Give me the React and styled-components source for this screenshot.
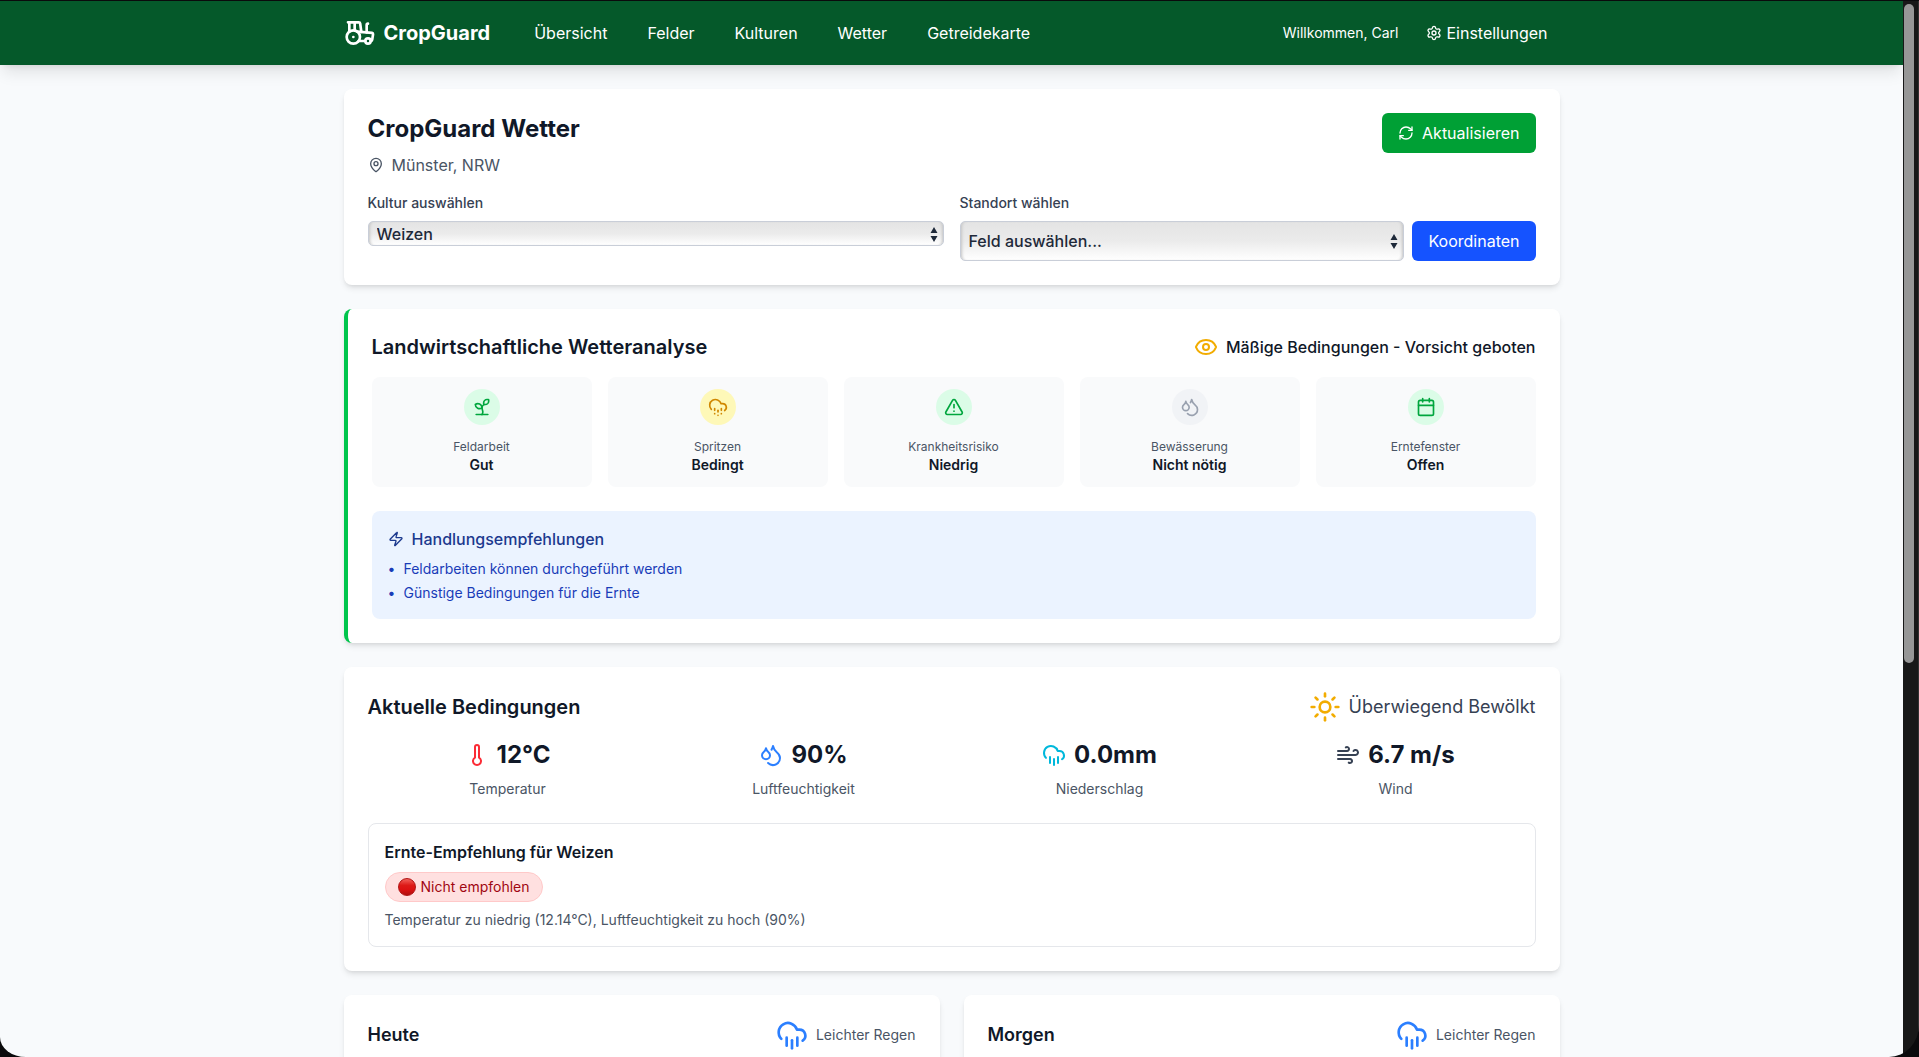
import React from "react";
import styled, { createGlobalStyle } from "styled-components";
import {
  Tractor, Settings, MapPin, RefreshCw, Eye, Sprout, CloudHail, TriangleAlert, Droplets,
  Calendar, Zap, Sun, Thermometer, CloudRain, Wind,
} from "lucide-react";

const GlobalStyle = createGlobalStyle`
  *, *::before, *::after { box-sizing: border-box; }
  body {
    margin: 0;
    background: #0a0a0c;
    color: #101828;
    font: 400 16px/24px Inter, "Liberation Sans", sans-serif;
  }
  h1, h2, h3, p, ul { margin: 0; padding: 0; }
  svg { display: block; flex: none; }
`;

const Frame = styled.div`
  height: 100vh;
  padding-top: 1px;
  background: #0a0a0c;
`;

const WindowShell = styled.div`
  display: flex;
  height: 100%;
  overflow: hidden;
  border-radius: 0 0 30px 26px / 0 0 32px 20px;
  background: #181818;
`;

const Page = styled.div`
  flex: 1;
  min-width: 0;
  overflow: hidden;
  background: #f8fafc;
`;

const ScrollTrack = styled.div`
  flex: none;
  width: 16px;
  padding: 3px 4px 0 1px;
  border-right: 1px solid #333;
`;

const ScrollThumb = styled.div`
  height: 62.6%;
  border-radius: 6px;
  background: #979797;
`;

const Header = styled.header`
  position: relative;
  background: #05592a;
  color: #fff;
  box-shadow: 0 10px 15px -3px rgba(0, 0, 0, 0.1), 0 4px 6px -4px rgba(0, 0, 0, 0.1);
`;

const HeaderInner = styled.div`
  display: flex;
  align-items: center;
  justify-content: space-between;
  max-width: 1280px;
  height: 64px;
  margin: 0 auto;
  padding: 0 32px;
`;

const HeaderGroup = styled.div`
  display: flex;
  align-items: center;
  gap: ${(p) => p.$gap}px;
`;

const Brand = styled.a`
  display: flex;
  align-items: center;
  gap: 8px;
  color: inherit;
  font-size: 20px;
  line-height: 28px;
  font-weight: 700;
  text-decoration: none;
`;

const Nav = styled.nav`
  display: flex;
  gap: 16px;
`;

const NavLink = styled.a`
  display: flex;
  align-items: center;
  gap: 4px;
  padding: 8px 12px;
  color: inherit;
  text-decoration: none;
`;

const Welcome = styled.span`
  font-size: 14px;
  line-height: 20px;
`;

const Main = styled.main`
  display: flex;
  flex-direction: column;
  gap: 24px;
  max-width: 1280px;
  margin: 0 auto;
  padding: 24px 32px;
`;

const Card = styled.section`
  padding: 24px;
  border-radius: 8px;
  border-left: ${(p) => (p.$accent ? `4px solid ${p.$accent}` : "none")};
  background: #fff;
  box-shadow: 0 4px 6px -1px rgba(0, 0, 0, 0.1), 0 2px 4px -2px rgba(0, 0, 0, 0.1);
`;

const CardHead = styled.div`
  display: flex;
  align-items: ${(p) => p.$align || "center"};
  justify-content: space-between;
  margin-bottom: 16px;
`;

const PageTitle = styled.h1`
  font-size: 24px;
  line-height: 32px;
  font-weight: 700;
`;

const Location = styled.p`
  display: flex;
  align-items: center;
  gap: 8px;
  margin-top: 8px;
  color: #4a5565;
`;

const Button = styled.button`
  display: flex;
  align-items: center;
  gap: 8px;
  padding: 8px 16px;
  border: 0;
  border-radius: 6px;
  background: ${(p) => p.$color};
  color: #fff;
  font: inherit;
`;

const FormGrid = styled.div`
  display: grid;
  grid-template-columns: 1fr 1fr;
  gap: 16px;
`;

const Label = styled.label`
  display: block;
  margin-bottom: 8px;
  color: #364153;
  font-size: 14px;
  line-height: 20px;
  font-weight: 500;
`;

const FieldRow = styled.div`
  display: flex;
  gap: 8px;
`;

const SelectBox = styled.div`
  position: relative;
  flex: 1;
  display: flex;
  height: ${(p) => p.$height}px;
`;

const Select = styled.select`
  appearance: none;
  width: 100%;
  padding: 0 24px 0 8px;
  border: 1px solid #c9ced8;
  border-radius: 5px;
  background: linear-gradient(#e4e4e4, #ebebeb 50%, #ffffff);
  box-shadow: inset 3px 0 3px -2px #c4c4c4, inset -3px 0 3px -2px #c4c4c4;
  color: #1e2939;
  font: inherit;
  font-weight: 500;
`;

const SelectArrows = styled.svg`
  position: absolute;
  top: 50%;
  right: 6px;
  margin-top: -7px;
  fill: #1e2939;
  pointer-events: none;
`;

const Heading = styled.h2`
  font-size: ${(p) => (p.$small ? 18 : 20)}px;
  line-height: 28px;
  font-weight: 600;
`;

const Status = styled.div`
  display: flex;
  align-items: center;
  gap: 8px;
  color: ${(p) => p.$color || "#101828"};
  font-size: ${(p) => p.$size || 16}px;
  line-height: ${(p) => (p.$size === 18 ? 28 : 24)}px;
  font-weight: ${(p) => p.$weight || 400};
`;

const Tiles = styled.div`
  display: grid;
  grid-template-columns: repeat(5, 1fr);
  gap: 16px;
`;

const Tile = styled.div`
  display: flex;
  flex-direction: column;
  align-items: center;
  padding: 12px;
  border-radius: 8px;
  background: #f9fafb;
`;

const TileIcon = styled.div`
  margin-bottom: 14px;
  padding: 8px;
  border-radius: 50%;
  background: ${(p) => p.$bg};
  color: ${(p) => p.$fg};
`;

const TileLabel = styled.p`
  color: #4a5565;
  font-size: 12px;
  line-height: 16px;
`;

const TileValue = styled.p`
  font-size: 14px;
  line-height: 20px;
  font-weight: 600;
`;

const Advice = styled.div`
  margin-top: 24px;
  padding: 16px;
  border-radius: 8px;
  background: #ebf3ff;
`;

const AdviceTitle = styled.h3`
  display: flex;
  align-items: center;
  gap: 8px;
  margin-bottom: 8px;
  color: #1c398e;
  font-size: 16px;
  line-height: 24px;
  font-weight: 500;
`;

const AdviceList = styled.ul`
  display: grid;
  gap: 4px;
  list-style: none;
  color: #193cb8;
  font-size: 14px;
  line-height: 20px;
`;

const AdviceItem = styled.li`
  display: flex;
  gap: 8px;

  &::before {
    content: "•";
    width: 8px;
    text-align: center;
  }
`;

const Metrics = styled.div`
  display: grid;
  grid-template-columns: repeat(4, 1fr);
  gap: 16px;
`;

const Metric = styled.div`
  display: flex;
  flex-direction: column;
  align-items: center;
  gap: 8px;
`;

const MetricValue = styled.div`
  display: flex;
  align-items: center;
  gap: 8px;
  font-size: 24px;
  line-height: 32px;
  font-weight: 700;

  svg { color: ${(p) => p.$icon}; }
`;

const Note = styled.p`
  color: #4a5565;
  font-size: 14px;
  line-height: 20px;
`;

const HarvestBox = styled.div`
  display: flex;
  flex-direction: column;
  align-items: flex-start;
  gap: 8px;
  margin-top: 24px;
  padding: 16px;
  border: 1px solid #e5e7eb;
  border-radius: 8px;
`;

const HarvestTitle = styled.h3`
  font-size: 16px;
  line-height: 24px;
  font-weight: 600;
`;

const Badge = styled.span`
  display: flex;
  align-items: center;
  gap: 5px;
  padding: 4px 12px;
  border: 1px solid #ffc9c9;
  border-radius: 15px;
  background: #ffe0e0;
  color: #9f0712;
  font-size: 14px;
  line-height: 20px;
`;

const RedDot = styled.i`
  width: 18px;
  height: 18px;
  border: 1px solid #b01212;
  border-radius: 50%;
  background: linear-gradient(#f0605a, #dd1a17 40%, #dc1212 65%, #b01010);
`;

const DayGrid = styled.div`
  display: grid;
  grid-template-columns: 1fr 1fr;
  gap: 24px;
`;

const NAV = ["Übersicht", "Felder", "Kulturen", "Wetter", "Getreidekarte"];

const AMBER = "#f2ac00";
const GREEN = { bg: "#dbfce7", fg: "#00a63e" };
const TILES = [
  { label: "Feldarbeit", value: "Gut", Icon: Sprout, ...GREEN },
  { label: "Spritzen", value: "Bedingt", Icon: CloudHail, bg: "#fef8b8", fg: "#d08700" },
  { label: "Krankheitsrisiko", value: "Niedrig", Icon: TriangleAlert, ...GREEN },
  { label: "Bewässerung", value: "Nicht nötig", Icon: Droplets, bg: "#f1f3f6", fg: "#99a1af" },
  { label: "Erntefenster", value: "Offen", Icon: Calendar, ...GREEN },
];

const METRICS = [
  { label: "Temperatur", value: "12°C", Icon: Thermometer, color: "#fb2c36" },
  { label: "Luftfeuchtigkeit", value: "90%", Icon: Droplets, color: "#2b7fff" },
  { label: "Niederschlag", value: "0.0mm", Icon: CloudRain, color: "#00b8db" },
  { label: "Wind", value: "6.7 m/s", Icon: Wind, color: "#364153" },
];

function SelectField({ id, height, children }) {
  return (
    <SelectBox $height={height}>
      <Select id={id}>{children}</Select>
      <SelectArrows width="8" height="15" viewBox="0 0 8 15" aria-hidden="true">
        <path d="M4 0 7.500 6H.5ZM4 15 .5 9h7Z" />
      </SelectArrows>
    </SelectBox>
  );
}

export default function App() {
  return (
    <Frame>
      <GlobalStyle />
      <WindowShell>
        <Page>
          <Header>
            <HeaderInner>
              <HeaderGroup $gap={32}>
                <Brand href="#start">
                  <Tractor size={32} />
                  CropGuard
                </Brand>
                <Nav>
                  {NAV.map((name) => (
                    <NavLink key={name} href={`#${name.toLowerCase()}`}>{name}</NavLink>
                  ))}
                </Nav>
              </HeaderGroup>
              <HeaderGroup $gap={16}>
                <Welcome>Willkommen, Carl</Welcome>
                <NavLink href="#einstellungen">
                  <Settings size={16} />
                  Einstellungen
                </NavLink>
              </HeaderGroup>
            </HeaderInner>
          </Header>

          <Main>
            <Card>
              <CardHead $align="flex-start">
                <div>
                  <PageTitle>CropGuard Wetter</PageTitle>
                  <Location>
                    <MapPin size={16} />
                    Münster, NRW
                  </Location>
                </div>
                <Button type="button" $color="#00a035">
                  <RefreshCw size={16} />
                  Aktualisieren
                </Button>
              </CardHead>
              <FormGrid>
                <div>
                  <Label htmlFor="kultur">Kultur auswählen</Label>
                  <SelectField id="kultur" height={25}>
                    <option>Weizen</option>
                  </SelectField>
                </div>
                <div>
                  <Label htmlFor="standort">Standort wählen</Label>
                  <FieldRow>
                    <SelectField id="standort" height={40}>
                      <option>Feld auswählen...</option>
                    </SelectField>
                    <Button type="button" $color="#1553ff">Koordinaten</Button>
                  </FieldRow>
                </div>
              </FormGrid>
            </Card>

            <Card $accent="#00c54c">
              <CardHead>
                <Heading>Landwirtschaftliche Wetteranalyse</Heading>
                <Status $weight={500}>
                  <Eye size={24} color={AMBER} />
                  Mäßige Bedingungen - Vorsicht geboten
                </Status>
              </CardHead>
              <Tiles>
                {TILES.map(({ label, value, Icon, bg, fg }) => (
                  <Tile key={label}>
                    <TileIcon $bg={bg} $fg={fg}><Icon size={20} /></TileIcon>
                    <TileLabel>{label}</TileLabel>
                    <TileValue>{value}</TileValue>
                  </Tile>
                ))}
              </Tiles>
              <Advice>
                <AdviceTitle>
                  <Zap size={16} />
                  Handlungsempfehlungen
                </AdviceTitle>
                <AdviceList>
                  <AdviceItem>Feldarbeiten können durchgeführt werden</AdviceItem>
                  <AdviceItem>Günstige Bedingungen für die Ernte</AdviceItem>
                </AdviceList>
              </Advice>
            </Card>

            <Card>
              <CardHead>
                <Heading>Aktuelle Bedingungen</Heading>
                <Status $size={18} $color="#364153">
                  <Sun size={32} color={AMBER} />
                  Überwiegend Bewölkt
                </Status>
              </CardHead>
              <Metrics>
                {METRICS.map(({ label, value, Icon, color }) => (
                  <Metric key={label}>
                    <MetricValue $icon={color}>
                      <Icon size={24} />
                      {value}
                    </MetricValue>
                    <Note>{label}</Note>
                  </Metric>
                ))}
              </Metrics>
              <HarvestBox>
                <HarvestTitle>Ernte-Empfehlung für Weizen</HarvestTitle>
                <Badge>
                  <RedDot />
                  Nicht empfohlen
                </Badge>
                <Note>Temperatur zu niedrig (12.14°C), Luftfeuchtigkeit zu hoch (90%)</Note>
              </HarvestBox>
            </Card>

            <DayGrid>
              {["Heute", "Morgen"].map((day) => (
                <Card key={day}>
                  <CardHead>
                    <Heading $small>{day}</Heading>
                    <Status $size={14} $color="#4a5565">
                      <CloudRain size={32} color="#2b7fff" />
                      Leichter Regen
                    </Status>
                  </CardHead>
                </Card>
              ))}
            </DayGrid>
          </Main>
        </Page>
        <ScrollTrack>
          <ScrollThumb />
        </ScrollTrack>
      </WindowShell>
    </Frame>
  );
}
